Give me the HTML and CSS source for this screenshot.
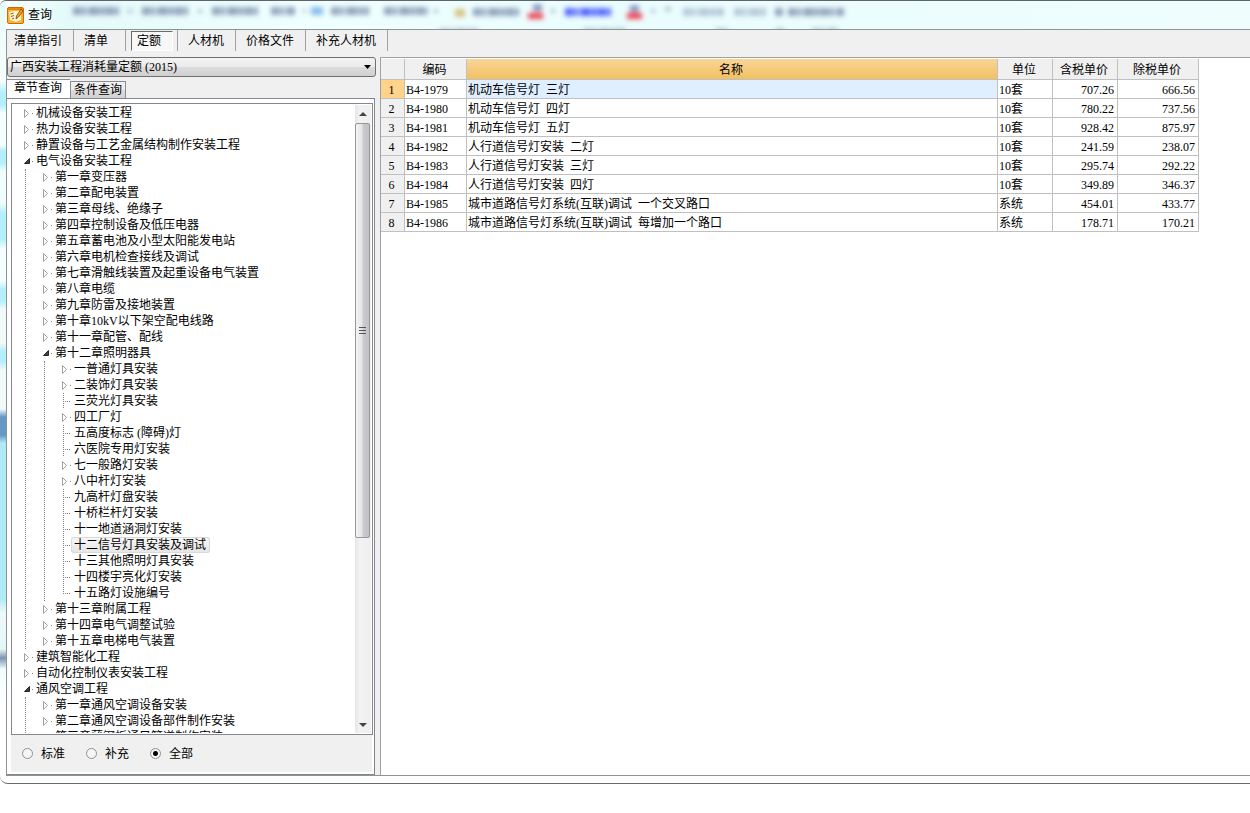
FILE: index.html
```html
<!DOCTYPE html>
<html lang="zh-CN">
<head>
<meta charset="utf-8">
<title>查询</title>
<link rel="stylesheet" href="styles.css">
</head>
<body>
<main class="window">
  <header class="titlebar">
    <svg class="glass" aria-hidden="true" width="900" height="28" viewBox="0 0 900 28">
      <defs>
        <filter id="soft" filterUnits="userSpaceOnUse" x="0" y="-10" width="900" height="50"><feGaussianBlur stdDeviation="2.8"/></filter>
      </defs>
      <g filter="url(#soft)" fill="none" stroke="#51658f" stroke-opacity=".6" stroke-width="8" stroke-dasharray="8 1 4 2 11 1 5 1">
        <path d="M67 10h46M136 10h48M206 10h48M265 10h24M325 10h38M378 10h44M467 11h46" />
        <path d="M559 11h47" stroke="#2c3cff" stroke-opacity=".8"/>
        <path d="M677 11h42M728 11h32" stroke-opacity=".35"/>
        <path d="M769 11h8M782 11h56"/>
        <path d="M305 10h12" stroke="#3f8fe0" stroke-dasharray="none"/>
        <path d="M449 12h10" stroke="#c89a30" stroke-dasharray="none"/>
        <path d="M527 7h9M624 8h9" stroke="#3f4f90" stroke-width="7" stroke-dasharray="none"/>
        <path d="M522 15h15M621 15h15" stroke="#f03040" stroke-opacity=".9" stroke-width="6" stroke-dasharray="none"/>
        <path d="M122 10h4M192 10h4M297 10h3M428 10h4M545 10h4M645 10h4M659 8h6" stroke-width="4" stroke-opacity=".4" stroke-dasharray="none"/>
        <path d="M434 29h38M578 29h42M710 29h12M770 29h8M806 29h26" stroke-width="3" stroke-opacity=".5"/>
      </g>
    </svg>
    <svg class="logo" aria-hidden="true" width="17" height="17" viewBox="0 0 17 17">
      <rect x=".5" y=".5" width="16" height="16" rx="1.500" fill="#f9b22c" stroke="#d06a08"/>
      <path d="M1 1h15v2H1z" fill="#e8850c"/>
      <path d="M2 5l5-1 7 0v9l-5 2-6-2z" fill="#fff6d4"/>
      <path d="M3.500 7l3-1M4 9.500l3-1M5 12l2-1" stroke="#a04c08" fill="none"/>
      <path d="M14 2L9.500 9l-.5 3 2.500-2L16 4z" fill="#f6a51c" stroke="#7d3d05" stroke-width=".8"/>
    </svg>
    <h1 class="title">查询</h1>
  </header>

  <div class="client">
    <nav class="toolbar">
      <button class="tool first" type="button">清单指引</button>
      <button class="tool" type="button">清单</button>
      <button class="tool pressed" type="button" aria-pressed="true"><span>定额</span></button>
      <button class="tool" type="button">人材机</button>
      <button class="tool" type="button">价格文件</button>
      <button class="tool" type="button">补充人材机</button>
    </nav>

    <div class="split">
      <section class="side">
        <select class="library" aria-label="定额库"><option>广西安装工程消耗量定额 (2015)</option></select>
        <div class="tabs" role="tablist">
          <button class="tab active" type="button" role="tab" aria-selected="true">章节查询</button>
          <button class="tab" type="button" role="tab" aria-selected="false">条件查询</button>
        </div>
        <div class="panel">
          <div class="treebox">
            <ul class="tree">
              <li><button class="node closed"><span>机械设备安装工程</span></button></li>
              <li><button class="node closed"><span>热力设备安装工程</span></button></li>
              <li><button class="node closed"><span>静置设备与工艺金属结构制作安装工程</span></button></li>
              <li><button class="node open"><span>电气设备安装工程</span></button>
                <ul>
                  <li><button class="node closed"><span>第一章变压器</span></button></li>
                  <li><button class="node closed"><span>第二章配电装置</span></button></li>
                  <li><button class="node closed"><span>第三章母线、绝缘子</span></button></li>
                  <li><button class="node closed"><span>第四章控制设备及低压电器</span></button></li>
                  <li><button class="node closed"><span>第五章蓄电池及小型太阳能发电站</span></button></li>
                  <li><button class="node closed"><span>第六章电机检查接线及调试</span></button></li>
                  <li><button class="node closed"><span>第七章滑触线装置及起重设备电气装置</span></button></li>
                  <li><button class="node closed"><span>第八章电缆</span></button></li>
                  <li><button class="node closed"><span>第九章防雷及接地装置</span></button></li>
                  <li><button class="node closed"><span>第十章10kV以下架空配电线路</span></button></li>
                  <li><button class="node closed"><span>第十一章配管、配线</span></button></li>
                  <li><button class="node open"><span>第十二章照明器具</span></button>
                    <ul>
                      <li><button class="node closed"><span>一普通灯具安装</span></button></li>
                      <li><button class="node closed"><span>二装饰灯具安装</span></button></li>
                      <li><button class="node leaf"><span>三荧光灯具安装</span></button></li>
                      <li><button class="node closed"><span>四工厂灯</span></button></li>
                      <li><button class="node leaf"><span>五高度标志 (障碍)灯</span></button></li>
                      <li><button class="node leaf"><span>六医院专用灯安装</span></button></li>
                      <li><button class="node closed"><span>七一般路灯安装</span></button></li>
                      <li><button class="node closed"><span>八中杆灯安装</span></button></li>
                      <li><button class="node leaf"><span>九高杆灯盘安装</span></button></li>
                      <li><button class="node leaf"><span>十桥栏杆灯安装</span></button></li>
                      <li><button class="node leaf"><span>十一地道涵洞灯安装</span></button></li>
                      <li><button class="node leaf selected"><span>十二信号灯具安装及调试</span></button></li>
                      <li><button class="node leaf"><span>十三其他照明灯具安装</span></button></li>
                      <li><button class="node leaf"><span>十四楼宇亮化灯安装</span></button></li>
                      <li><button class="node leaf last"><span>十五路灯设施编号</span></button></li>
                    </ul>
                  </li>
                  <li><button class="node closed"><span>第十三章附属工程</span></button></li>
                  <li><button class="node closed"><span>第十四章电气调整试验</span></button></li>
                  <li><button class="node closed"><span>第十五章电梯电气装置</span></button></li>
                </ul>
              </li>
              <li><button class="node closed"><span>建筑智能化工程</span></button></li>
              <li><button class="node closed"><span>自动化控制仪表安装工程</span></button></li>
              <li><button class="node open"><span>通风空调工程</span></button>
                <ul>
                  <li><button class="node closed"><span>第一章通风空调设备安装</span></button></li>
                  <li><button class="node closed"><span>第二章通风空调设备部件制作安装</span></button></li>
                  <li><button class="node closed"><span>第三章薄钢板通风管道制作安装</span></button></li>
                </ul>
              </li>
            </ul>
            <div class="scrollbar">
              <button class="arrow" type="button" aria-label="向上滚动"><svg width="8" height="4" viewBox="0 0 8 4"><path d="M4 0l4 4H0z" fill="#444"/></svg></button>
              <div class="track"><div class="thumb"><svg width="8" height="9" viewBox="0 0 8 9"><path d="M0 1.500h7M0 4.500h7M0 7.500h7" stroke="#555"/></svg></div></div>
              <button class="arrow" type="button" aria-label="向下滚动"><svg width="8" height="4" viewBox="0 0 8 4"><path d="M0 0h8L4 4z" fill="#444"/></svg></button>
            </div>
          </div>
          <div class="filters">
            <label><input type="radio" name="scope">标准</label>
            <label><input type="radio" name="scope">补充</label>
            <label><input type="radio" name="scope" checked>全部</label>
          </div>
        </div>
      </section>

      <section class="results">
        <table class="grid">
          <colgroup><col class="c-no"><col class="c-code"><col class="c-name"><col class="c-unit"><col class="c-tax"><col class="c-net"></colgroup>
          <thead>
            <tr><th></th><th>编码</th><th class="sorted">名称</th><th>单位</th><th>含税单价</th><th>除税单价</th></tr>
          </thead>
          <tbody>
            <tr class="current"><th>1</th><td>B4-1979</td><td>机动车信号灯&ensp;三灯</td><td>10套</td><td class="num">707.26</td><td class="num">666.56</td></tr>
            <tr><th>2</th><td>B4-1980</td><td>机动车信号灯&ensp;四灯</td><td>10套</td><td class="num">780.22</td><td class="num">737.56</td></tr>
            <tr><th>3</th><td>B4-1981</td><td>机动车信号灯&ensp;五灯</td><td>10套</td><td class="num">928.42</td><td class="num">875.97</td></tr>
            <tr><th>4</th><td>B4-1982</td><td>人行道信号灯安装&ensp;二灯</td><td>10套</td><td class="num">241.59</td><td class="num">238.07</td></tr>
            <tr><th>5</th><td>B4-1983</td><td>人行道信号灯安装&ensp;三灯</td><td>10套</td><td class="num">295.74</td><td class="num">292.22</td></tr>
            <tr><th>6</th><td>B4-1984</td><td>人行道信号灯安装&ensp;四灯</td><td>10套</td><td class="num">349.89</td><td class="num">346.37</td></tr>
            <tr><th>7</th><td>B4-1985</td><td>城市道路信号灯系统(互联)调试&ensp;一个交叉路口</td><td>系统</td><td class="num">454.01</td><td class="num">433.77</td></tr>
            <tr><th>8</th><td>B4-1986</td><td>城市道路信号灯系统(互联)调试&ensp;每增加一个路口</td><td>系统</td><td class="num">178.71</td><td class="num">170.21</td></tr>
          </tbody>
        </table>
      </section>
    </div>
  </div>
</main>
</body>
</html>
```
FILE: styles.css
```css
* { box-sizing: border-box; }

body {
  margin: 0;
  height: 100vh;
  padding-bottom: 29px;
  background: #fff;
  overflow: hidden;
}

body, button, select, input {
  font-family: "Liberation Serif", "Noto Sans CJK SC", serif;
  font-size: 12px;
  line-height: 16px;
  color: #000;
}

button {
  margin: 0;
  padding: 0;
  border: 0;
  background: none;
  text-align: left;
}

ul { list-style: none; margin: 0; padding: 0; }

/* Window frame */
.window {
  display: flex;
  flex-direction: column;
  height: 100%;
  padding: 0 0 7px 6px;
  border-top: 1px solid #5f6468;
  border-bottom: 1px solid #6a6a6a;
  border-radius: 6px 0 0 8px;
  background: linear-gradient(#e9fbfc 0, #f6fefe 80px, #b4effc 92px, #b4effc 104px, #f4fefe 112px, #f4fefe 144px, #b4effc 150px, #b4effc 162px, #effdfe 170px, #effdfe 202px, #b4effc 212px, #b4effc 238px, #f4fefe 248px, #f4fefe 280px, #b4effc 288px, #b4effc 300px, #f2faf9 308px, #f2faf9 342px, #b4effc 350px, #b4effc 360px, #f2faf9 370px, #f2faf9 408px, #6797c4 416px, #6797c4 434px, #b0eaf6 442px, #b0eaf6 598px, #eefafa 612px, #e6f6f6 648px, #7d94b4 657px, #effdfd 668px, #fff 700px);
}

.titlebar {
  position: relative;
  display: flex;
  align-items: center;
  gap: 4px;
  flex: none;
  height: 28px;
  padding-left: 1px;
  background: linear-gradient(90deg, #fafefe 0, #e4fafa 60px, #f0ffff 300px, #eafdfe 600px, #effdfd 100%);
}

.glass { position: absolute; left: 0; top: 0; }
.logo, .title { position: relative; }
.title { margin: 0; font-size: 12px; font-weight: 400; }

.client {
  display: flex;
  flex-direction: column;
  flex: 1;
  min-height: 0;
  border: 1px solid #8d9494;
  border-right: 0;
  background: #f0f0f0;
}

/* Toolbar */
.toolbar { display: flex; flex: none; height: 27px; }

.tool {
  height: 21px;
  min-width: 52px;
  padding: 0 11px 0 10px;
  border-right: 1px solid #a0a0a0;
}
.tool.first { padding-left: 7px; }
.tool.pressed { padding: 1px 4px 0 5px; }
.tool.pressed span {
  display: block;
  height: 20px;
  padding: 1px 5px;
  border: 1px solid #696969;
  border-right-color: #fff;
  border-bottom-color: #fff;
  background: #f7f7f7;
}

.split { display: flex; flex: 1; min-height: 0; gap: 4px; }

/* Left side */
.side {
  display: flex;
  flex-direction: column;
  flex: none;
  width: 369px;
}

.library {
  appearance: none;
  width: 100%;
  height: 20px;
  padding: 0 20px 0 2px;
  border: 1px solid #707070;
  border-radius: 3px;
  background:
    url("data:image/svg+xml,%3Csvg xmlns='http://www.w3.org/2000/svg' width='7' height='4'%3E%3Cpath d='M0 0h7L3.5 4z'/%3E%3C/svg%3E") no-repeat right 4px center,
    linear-gradient(#f3f3f3, #ebebeb 50%, #dcdcdc 50%, #d0d0d0);
}

.tabs { display: flex; align-items: flex-end; height: 21px; flex: none; }
.tab {
  height: 17px;
  padding: 0 3px;
  border: 1px solid #898c95;
  border-bottom: 0;
  background: linear-gradient(#f2f2f2, #ebebeb 50%, #dddddd 50%, #d2d2d2);
}
.tab.active { height: 19px; padding: 0 8px 2px 7px; border-left: 0; border-right: 0; background: #fff; }

.panel {
  display: flex;
  flex-direction: column;
  flex: 1;
  min-height: 0;
  padding: 4px 1px 2px 4px;
  width: 368px;
  border: 1px solid #828790;
  border-left: 0;
  background: #fff;
}

.treebox {
  display: flex;
  flex: 1;
  min-height: 0;
  padding: 1px 1px 1px 0;
  border: 1px solid #828790;
}

/* Tree */
.tree { flex: 1; min-width: 0; overflow: hidden; padding-left: 12px; }
.tree ul { margin-left: 1px; padding-left: 17px; border-left: 1px dotted #808080; }

.node { display: flex; height: 16px; white-space: nowrap; }
.node::before { content: ""; width: 9px; height: 16px; background-repeat: no-repeat; }
.node span { height: 16px; padding: 0 4px 0 3px; line-height: 16px; }
.node.closed::before {
  background-image: url("data:image/svg+xml,%3Csvg xmlns='http://www.w3.org/2000/svg' width='9' height='16'%3E%3Cpath d='M.5 4.500v8l4-4z' fill='%23fff' stroke='%23a0a0a0'/%3E%3Cpath d='M8 8h1v1H8z' fill='%23808080'/%3E%3C/svg%3E");
}
.node.open::before {
  background-image: url("data:image/svg+xml,%3Csvg xmlns='http://www.w3.org/2000/svg' width='9' height='16'%3E%3Cpath d='M5.500 5.500v5h-5z' fill='%23404040' stroke='%23262626'/%3E%3Cpath d='M8 8h1v1H8z' fill='%23808080'/%3E%3C/svg%3E");
}
.node.leaf::before {
  background-image: url("data:image/svg+xml,%3Csvg xmlns='http://www.w3.org/2000/svg' width='9' height='16'%3E%3Cpath d='M1.500 0v16M1 8.500h8' stroke='%23808080' stroke-dasharray='1 1'/%3E%3C/svg%3E");
}
.node.last::before {
  background-image: url("data:image/svg+xml,%3Csvg xmlns='http://www.w3.org/2000/svg' width='9' height='16'%3E%3Cpath d='M1.500 0v9M1 8.500h8' stroke='%23808080' stroke-dasharray='1 1'/%3E%3C/svg%3E");
}
.node.selected span {
  border-radius: 3px;
  background: linear-gradient(#f8f8f8, #e5e5e5);
  box-shadow: inset 0 0 0 1px #d9d9d9;
}

/* Scrollbar */
.scrollbar { display: flex; flex-direction: column; flex: none; width: 16px; background: linear-gradient(90deg, #e6e6e6, #f2f2f2 30%, #efefef); }
.arrow { display: flex; align-items: center; justify-content: center; height: 17px; flex: none; }
.track { flex: 1; min-height: 0; padding-top: 1px; }
.thumb {
  display: flex;
  align-items: center;
  justify-content: center;
  width: 15px;
  height: 70%;
  border: 1px solid #979797;
  border-radius: 2px;
  background: linear-gradient(90deg, #f4f4f4, #e6e6e8 45%, #cbcbd0 55%, #c0c0c6);
}

.filters { display: flex; flex: none; align-items: center; gap: 21px; height: 37px; padding-left: 11px; margin-right: 1px; background: #f0f0f0; }
.filters label { display: flex; align-items: center; gap: 8px; }
.filters input {
  appearance: none;
  width: 11px;
  height: 11px;
  margin: 0;
  border: 1px solid #8e8f8f;
  border-radius: 50%;
  background: #f6f6f6;
}
.filters input:checked { background: radial-gradient(circle, #000 0 2px, #f6f6f6 3px); }

/* Result grid */
.results { flex: 1; min-width: 0; padding-top: 1px; border: 1px solid #a0a0a0; border-width: 1px 0 0 1px; background: #fff; overflow: hidden; }

.grid { border-collapse: separate; border-spacing: 0; table-layout: fixed; width: 818px; }
.c-no { width: 24px; }
.c-code { width: 62px; }
.c-name { width: 531px; }
.c-unit { width: 55px; }
.c-tax { width: 65px; }
.c-net { width: 81px; }

.grid th, .grid td {
  height: 19px;
  padding: 1px 3px 0 1px;
  border: 1px solid #c0c0c0;
  border-width: 0 1px 1px 0;
  font-weight: 400;
  white-space: nowrap;
}
.grid th { background: #f0f0f0; text-align: center; }
.grid thead th { height: 21px; }
.grid .num { text-align: right; }
.grid th.sorted { background: linear-gradient(#f8d597, #f1c061); }
.grid .current th { background: #ffd48a; }
.grid .current td:nth-child(3) { background: #e0efff; }
```
